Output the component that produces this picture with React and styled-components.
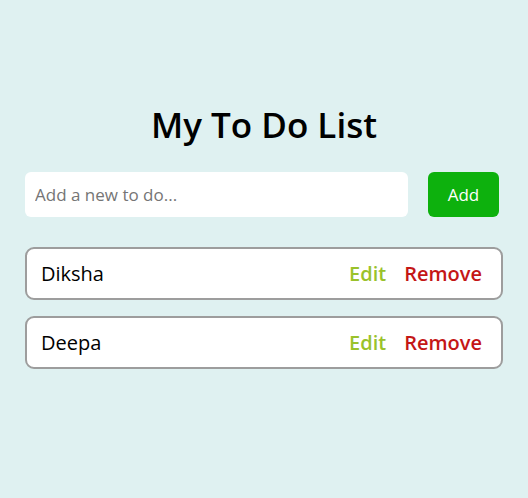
import React from "react";
import styled, { createGlobalStyle } from "styled-components";

const Global = createGlobalStyle`
  html, body { margin: 0; padding: 0; }
  body {
    background: #dff1f1;
    font-family: "Open Sans", "Noto Sans", sans-serif;
    color: #000;
  }
`;

const Page = styled.div`
  width: 478px;
  margin: 0 auto;
  padding-top: 100px;
  display: flex;
  flex-direction: column;
`;

const Title = styled.h1`
  margin: 0;
  font-size: 35px;
  line-height: 50px;
  font-weight: 600;
  text-align: center;
`;

const Form = styled.form`
  margin-top: 22px;
  display: flex;
  gap: 20px;
  padding-right: 4px;
`;

const Input = styled.input`
  flex: 1;
  height: 45px;
  box-sizing: border-box;
  border: none;
  border-radius: 6px;
  background: #fff;
  padding: 0 10px;
  font-family: inherit;
  font-size: 17px;
  outline: none;
  &::placeholder { color: #757575; }
`;

const AddButton = styled.button`
  width: 71px;
  height: 45px;
  border: none;
  border-radius: 6px;
  background: #0db10d;
  color: #fff;
  font-family: inherit;
  font-size: 17px;
`;

const List = styled.ul`
  list-style: none;
  margin: 30px 0 0;
  padding: 0;
  display: flex;
  flex-direction: column;
  gap: 16px;
`;

const Item = styled.li`
  box-sizing: border-box;
  height: 53px;
  display: flex;
  align-items: center;
  gap: 18px;
  padding: 0 19px 0 14px;
  background: #fff;
  border: 2px solid #9d9d9d;
  border-radius: 9px;
`;

const Name = styled.span`
  flex: 1;
  font-size: 20px;
`;

const Action = styled.span`
  font-size: 20px;
  font-weight: 600;
  color: ${(p) => p.$color};
`;

const todos = ["Diksha", "Deepa"];

export default function App() {
  return (
    <>
      <Global />
      <Page>
        <Title>My To Do List</Title>
        <Form onSubmit={(e) => e.preventDefault()}>
          <Input placeholder="Add a new to do..." />
          <AddButton type="submit">Add</AddButton>
        </Form>
        <List>
          {todos.map((t) => (
            <Item key={t}>
              <Name>{t}</Name>
              <Action $color="#9ac22b">Edit</Action>
              <Action $color="#c41616">Remove</Action>
            </Item>
          ))}
        </List>
      </Page>
    </>
  );
}
